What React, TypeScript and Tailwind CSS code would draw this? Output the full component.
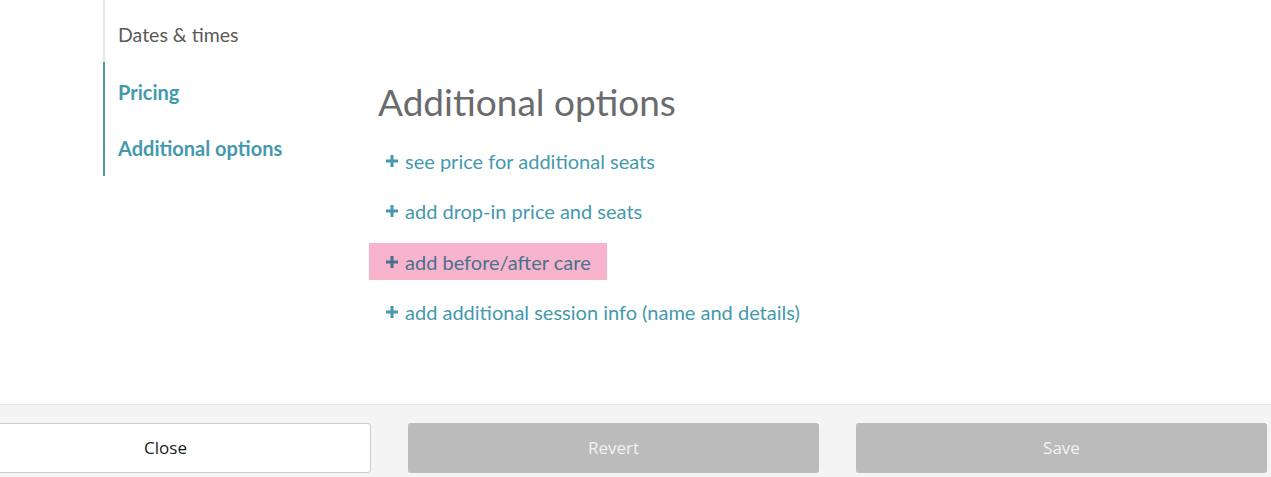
import React from 'react';

const TEAL = '#4499ad';

const Plus: React.FC<{ color: string }> = ({ color }) => (
  <svg width="12" height="12" viewBox="0 0 12 12" className="shrink-0">
    <rect x="0" y="4.5" width="12" height="3" fill={color} />
    <rect x="4.5" y="0" width="3" height="12" fill={color} />
  </svg>
);

const options = [
  { label: 'see price for additional seats' },
  { label: 'add drop-in price and seats' },
  { label: 'add before/after care', highlight: true },
  { label: 'add additional session info (name and details)' },
];

export default function App() {
  return (
    <div className="w-[1271px] h-[477px] bg-white flex flex-col overflow-hidden" style={{ fontFamily: 'Lato, "Open Sans", sans-serif' }}>
      {/* Body */}
      <div className="flex-1 flex pl-[103px]">
        {/* Side nav */}
        <nav className="w-[266px] flex flex-col">
          <div className="h-[62px] border-l-2 border-[#e6e6e6] pl-[13px] pt-[22px] text-[19.5px] leading-[26px] text-[#5a5a5a]">
            Dates &amp; times
          </div>
          <div className="border-l-2 border-[#4499ad]">
            <div className="h-[57px] pl-[13px] pt-[2px] flex items-center text-[20px] font-bold text-[#4499ad]">Pricing</div>
            <div className="h-[57px] pl-[13px] pt-[0px] flex items-center text-[20px] font-bold text-[#4499ad]">Additional options</div>
          </div>
        </nav>

        {/* Content */}
        <main className="flex-1 pt-[80px]">
          <h1 className="ml-[9px] text-[37px] leading-[43px] text-[#6a6b6e]">Additional options</h1>
          <ul className="mt-[19px] flex flex-col gap-[13.5px]">
            {options.map((o) => (
              <li key={o.label}>
                <div
                  className={`inline-flex h-[37px] items-center gap-[7px] pl-[17px] pr-[16px] text-[20px] ${
                    o.highlight ? 'bg-[#f8b4cd] text-[#49718c]' : 'text-[#4499ad]'
                  }`}
                >
                  <Plus color={o.highlight ? '#49718c' : TEAL} />
                  <span>{o.label}</span>
                </div>
              </li>
            ))}
          </ul>
        </main>
      </div>

      {/* Footer */}
      <footer className="h-[73px] shrink-0 border-t border-[#e6e6e6] bg-[#f4f4f4] pt-[18px]" style={{ fontFamily: '"Open Sans", sans-serif' }}>
        <div className="flex gap-[37px] -ml-[40px]">
          <button className="w-[411px] h-[50px] rounded-[3px] border border-[#cccccc] bg-white text-[17px] text-[#1a1a1a]">Close</button>
          <button className="w-[411px] h-[50px] rounded-[3px] bg-[#bbbbbb] text-[17px] text-[#f3f3f3]">Revert</button>
          <button className="w-[411px] h-[50px] rounded-[3px] bg-[#bbbbbb] text-[17px] text-[#f3f3f3]">Save</button>
        </div>
      </footer>
    </div>
  );
}
